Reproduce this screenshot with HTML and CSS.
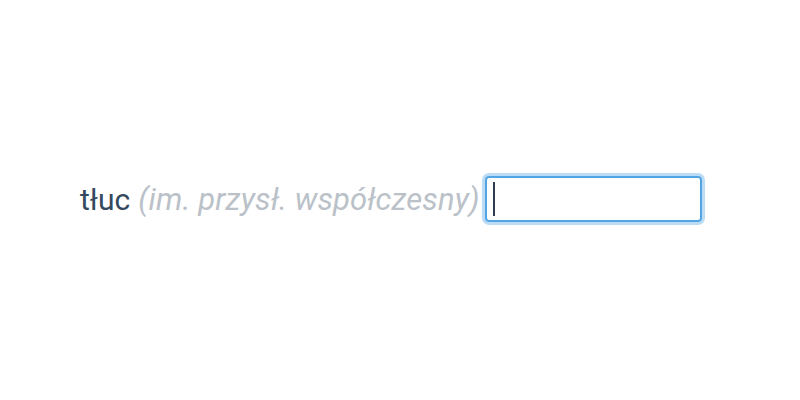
FILE: index.html
```html
<!DOCTYPE html>
<html lang="pl">
<head>
<meta charset="utf-8">
<link rel="stylesheet" href="styles.css">
</head>
<body>
<div class="stage">
  <label class="row">
    <span class="word">tłuc</span>
    <span class="hint">(im. przysł. współczesny)</span>
    <span class="field"><span class="caret"></span></span>
  </label>
</div>
</body>
</html>
```
FILE: styles.css
```css
html, body { margin: 0; padding: 0; background: #ffffff; }
.stage {
  width: 800px;
  height: 400px;
  box-sizing: border-box;
  padding-left: 80px;
  padding-bottom: 2px;
  display: flex;
  align-items: center;
  font-family: Roboto, "Liberation Sans", sans-serif;
}
.row {
  display: flex;
  align-items: center;
  gap: 8px;
}
.word { font-size: 30px; color: #34495e; }
.hint { font-size: 31px; color: #bac1c8; font-style: italic; letter-spacing: 0.12px; }
.field {
  box-sizing: border-box;
  width: 217px;
  height: 46px;
  margin-left: -3px;
  border: 2px solid #52a5e2;
  border-radius: 4px;
  box-shadow: 0 0 0 3px #bcdcf5;
  display: flex;
  align-items: center;
  padding-left: 6px;
}
.caret { width: 2px; height: 34px; background: #2c3e50; }
```
